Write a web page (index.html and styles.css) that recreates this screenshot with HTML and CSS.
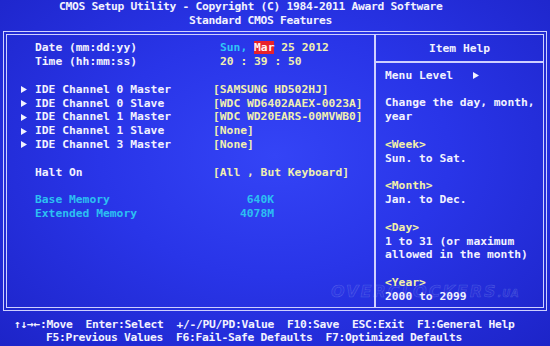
FILE: index.html
```html
<!DOCTYPE html>
<html>
<head>
    <title>CMOS Setup Utility</title>
    <link rel="stylesheet" href="styles.css">
</head>
<body>
    <div class="screen">
        <div class="top">
            <div class="line title">CMOS Setup Utility - Copyright (C) 1984-2011 Award Software</div>
            <div class="line subtitle">Standard CMOS Features</div>
        </div>

        <div class="box">
            <div class="settings">
                <div class="row">
                    <span class="mark"></span><span class="label">Date (mm:dd:yy)</span>
                    <span class="value shift"><span class="cyan">Sun,</span> <span class="sel">Mar</span> 25 2012</span>
                </div>
                <div class="row">
                    <span class="mark"></span><span class="label">Time (hh:mm:ss)</span>
                    <span class="value shift">20 : 39 : 50</span>
                </div>
                <div class="row"></div>
                <div class="row">
                    <span class="mark"><svg width="6" height="7"><path d="M0 0L6 3.5L0 7z" fill="#f2f2ff"/></svg></span><span class="label">IDE Channel 0 Master</span>
                    <span class="value">[SAMSUNG HD502HJ]</span>
                </div>
                <div class="row">
                    <span class="mark"><svg width="6" height="7"><path d="M0 0L6 3.5L0 7z" fill="#f2f2ff"/></svg></span><span class="label">IDE Channel 0 Slave</span>
                    <span class="value">[WDC WD6402AAEX-0023A]</span>
                </div>
                <div class="row">
                    <span class="mark"><svg width="6" height="7"><path d="M0 0L6 3.5L0 7z" fill="#f2f2ff"/></svg></span><span class="label">IDE Channel 1 Master</span>
                    <span class="value">[WDC WD20EARS-00MVWB0]</span>
                </div>
                <div class="row">
                    <span class="mark"><svg width="6" height="7"><path d="M0 0L6 3.5L0 7z" fill="#f2f2ff"/></svg></span><span class="label">IDE Channel 1 Slave</span>
                    <span class="value">[None]</span>
                </div>
                <div class="row">
                    <span class="mark"><svg width="6" height="7"><path d="M0 0L6 3.5L0 7z" fill="#f2f2ff"/></svg></span><span class="label">IDE Channel 3 Master</span>
                    <span class="value">[None]</span>
                </div>
                <div class="row"></div>
                <div class="row">
                    <span class="mark"></span><span class="label">Halt On</span>
                    <span class="value">[All , But Keyboard]</span>
                </div>
                <div class="row"></div>
                <div class="row info">
                    <span class="mark"></span><span class="label">Base Memory</span>
                    <span class="value mem">640K</span>
                </div>
                <div class="row info">
                    <span class="mark"></span><span class="label">Extended Memory</span>
                    <span class="value mem">4078M</span>
                </div>
            </div>

            <div class="help">
                <div class="help-head">Item Help</div>
                <div class="help-body">
                    <div class="row">Menu Level   <svg width="6" height="7"><path d="M0 0L6 3.5L0 7z" fill="#f2f2ff"/></svg></div>
                    <div class="row"></div>
                    <div class="row">Change the day, month,</div>
                    <div class="row">year</div>
                    <div class="row"></div>
                    <div class="row key">&lt;Week&gt;</div>
                    <div class="row">Sun. to Sat.</div>
                    <div class="row"></div>
                    <div class="row key">&lt;Month&gt;</div>
                    <div class="row">Jan. to Dec.</div>
                    <div class="row"></div>
                    <div class="row key">&lt;Day&gt;</div>
                    <div class="row">1 to 31 (or maximum</div>
                    <div class="row">allowed in the month)</div>
                    <div class="row"></div>
                    <div class="row key">&lt;Year&gt;</div>
                    <div class="row">2000 to 2099</div>
                </div>
            </div>

            <div class="watermark">OVERCLOCKERS<small>.UA</small></div>
        </div>

        <div class="bottom">
            <div class="line keys1">↑↓→←:Move  Enter:Select  +/-/PU/PD:Value  F10:Save  ESC:Exit  F1:General Help</div>
            <div class="line keys2">F5:Previous Values  F6:Fail-Safe Defaults  F7:Optimized Defaults</div>
        </div>
    </div>
</body>
</html>
```

FILE: styles.css
```css
html, body {
    margin: 0;
    padding: 0;
}

body {
    width: 550px;
    height: 346px;
    overflow: hidden;
    background: radial-gradient(ellipse at 50% 45%, #3444f6 0%, #2935e8 45%, #1d24c8 100%);
    color: #f2f2ff;
    font-family: "DejaVu Sans Mono", "Liberation Mono", monospace;
    font-weight: bold;
    font-size: 11.3px;
}

.screen {
    display: flex;
    flex-direction: column;
    height: 346px;
}

.line,
.row {
    height: 13.84px;
    line-height: 13.84px;
    white-space: pre;
}

.top .line,
.bottom .line {
    letter-spacing: -0.3px;
}

.title {
    padding-left: 59px;
}

.subtitle {
    padding-left: 189px;
}

.box {
    position: relative;
    display: flex;
    height: 280px;
    box-sizing: border-box;
    margin: 3px 3px 0 3px;
    border: 4px double #cfd0ff;
}

.settings {
    width: 353px;
    padding: 6.6px 0 0 14px;
}

.settings .row {
    display: flex;
    align-items: center;
}

.mark {
    width: 14px;
    flex: none;
    display: flex;
    align-items: center;
}

.label {
    width: 178px;
    flex: none;
}

.value {
    color: #f0efb0;
}

.shift {
    padding-left: 7px;
}

.cyan {
    color: #30c6f6;
}

.sel {
    background: #e8222a;
    color: #fff4f0;
}

.info .label,
.info .value {
    color: #2cc0f2;
}

.mem {
    display: inline-block;
    width: 61px;
    text-align: right;
}

.help {
    flex: 1;
    border-left: 2px solid #cfd0ff;
}

.help-head {
    height: 25px;
    line-height: 26px;
    text-align: center;
    border-bottom: 2px solid #cfd0ff;
    padding-top: 1px;
}

.help-body {
    padding: 6px 0 0 9px;
}

.help-body svg {
    vertical-align: -0.5px;
}

.key {
    color: #f2f0a8;
}

.watermark {
    position: absolute;
    left: 324px;
    top: 247px;
    font-family: "DejaVu Sans", sans-serif;
    font-style: italic;
    font-weight: bold;
    font-size: 16px;
    letter-spacing: 2px;
    color: rgba(255, 255, 255, 0.05);
    -webkit-text-stroke: 0.6px rgba(220, 225, 255, 0.2);
}

.watermark small {
    font-size: 10px;
    letter-spacing: 1px;
}

.bottom {
    margin-top: 7px;
}

.keys1 {
    padding-left: 14px;
}

.keys2 {
    padding-left: 46px;
}
```
